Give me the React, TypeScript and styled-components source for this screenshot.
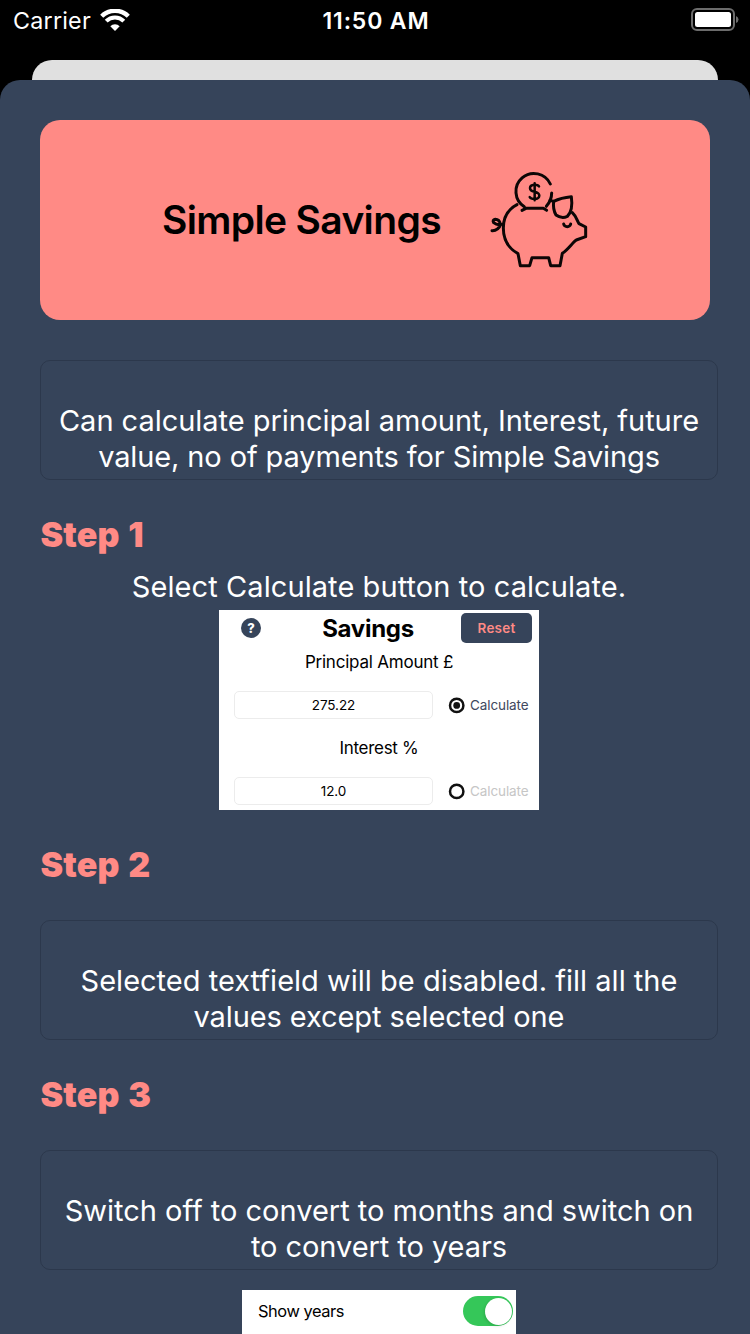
import React from "react";
import styled, { createGlobalStyle } from "styled-components";

const navy = "#36445a";
const coral = "#ff8a85";

const GlobalStyle = createGlobalStyle`
  * { box-sizing: border-box; }
  html, body { margin: 0; padding: 0; background: #000; }
  body { font-family: Inter, "Liberation Sans", sans-serif; overflow: hidden; }
`;

const Screen = styled.main`
  width: 750px;
  height: 1334px;
  background: #000;
  overflow: hidden;
  display: flex;
  flex-direction: column;
`;

const StatusBar = styled.header`
  height: 60px;
  padding: 0 11px 20px 13px;
  display: grid;
  grid-template-columns: 1fr auto 1fr;
  align-items: center;
  color: #fff;
`;

const Carrier = styled.div`
  display: flex;
  align-items: center;
  gap: 9px;
`;

const Clock = styled.div`
  padding-top: 2px;
`;

const BatterySlot = styled.div`
  display: flex;
  justify-content: flex-end;
`;

const Text = styled.span<{ $size: number; $weight?: number; $track?: number; $color?: string }>`
  font-size: ${(p) => p.$size}px;
  font-weight: ${(p) => p.$weight ?? 400};
  letter-spacing: ${(p) => p.$track ?? 0}px;
  color: ${(p) => p.$color ?? "inherit"};
  white-space: nowrap;
`;

const BackCard = styled.div`
  height: 20px;
  margin: 0 32px;
  background: #e0e0e0;
  border-radius: 20px 20px 0 0;
`;

const Sheet = styled.section`
  flex: 1;
  min-height: 0;
  overflow: hidden;
  background: ${navy};
  border-radius: 20px 20px 0 0;
  padding: 40px 32px 0 40px;
  display: flex;
  flex-direction: column;
  > * { flex-shrink: 0; }
`;

const Banner = styled.div`
  width: 670px;
  height: 200px;
  margin-bottom: 40px;
  border-radius: 20px;
  background: ${coral};
  color: #000;
  display: flex;
  align-items: center;
  padding-left: 122px;
`;

const BannerTitle = styled.h1`
  margin: 0;
  padding-bottom: 2px;
  width: 318px;
  font-size: 39px;
  font-weight: 600;
  letter-spacing: -0.65px;
  white-space: nowrap;
`;

const Note = styled.div`
  height: 120px;
  border: 1px solid #2c384c;
  border-radius: 10px;
  padding-top: 42px;
  display: flex;
  flex-direction: column;
  align-items: center;
  color: #fff;
  line-height: 36px;
`;

const StepTitle = styled.h2<{ $gap?: number }>`
  margin: 40px 0 ${(p) => p.$gap ?? 40}px;
  height: 30px;
  padding-left: 0.5px;
  line-height: 30px;
  font-size: 34px;
  font-weight: 900;
  letter-spacing: 0.2px;
  word-spacing: 1.6px;
  color: ${coral};
`;

const Caption = styled.div`
  height: 40px;
  line-height: 34px;
  text-align: center;
  color: #fff;
`;

const Preview = styled.div`
  align-self: center;
  width: 320px;
  height: 200px;
  background: #fff;
  color: #000;
`;

const PreviewHeader = styled.div`
  height: 36px;
  padding: 0 7px 0 22px;
  display: grid;
  grid-template-columns: 34px 1fr 71px;
  align-items: center;
  justify-items: center;
`;

const Help = styled.span`
  justify-self: start;
  width: 20px;
  height: 20px;
  border-radius: 50%;
  background: ${navy};
  color: #fff;
  font-size: 13px;
  font-weight: 800;
  line-height: 20px;
  text-align: center;
`;

const Reset = styled.span`
  width: 71px;
  height: 30px;
  border-radius: 5px;
  background: ${navy};
  display: flex;
  align-items: center;
  justify-content: center;
`;

const FieldLabel = styled.div<{ $height: number; $below: number }>`
  height: ${(p) => p.$height}px;
  margin-bottom: ${(p) => p.$below}px;
  display: flex;
  justify-content: center;
  align-items: center;
`;

const FieldRow = styled.div`
  height: 28px;
  padding-left: 15px;
  display: flex;
  align-items: center;
`;

const Field = styled.div`
  width: 199px;
  height: 28px;
  margin-right: 15px;
  border: 1px solid #ececec;
  border-radius: 5px;
  display: flex;
  align-items: center;
  justify-content: center;
`;

const RadioIcon = styled.svg`
  margin-right: 5px;
`;

const Radio = ({ on }: { on: boolean }) => (
  <RadioIcon width="17" height="17" viewBox="0 0 17 17" fill="none">
    <circle cx="8.7" cy="8.4" r="6.7" stroke="#111" strokeWidth="2.5" />
    {on && <circle cx="8.7" cy="8.4" r="3.4" fill="#111" />}
  </RadioIcon>
);

const SwitchRow = styled.div`
  width: 274px;
  height: 60px;
  margin: 20px 0 0 202px;
  padding: 6px 3px 0 16px;
  background: #fff;
  color: #000;
  display: flex;
  align-items: flex-start;
  justify-content: space-between;
  line-height: 30px;
`;

const Toggle = styled.span`
  width: 50px;
  height: 30px;
  padding: 1.5px;
  border-radius: 15px;
  background: #35c759;
  display: flex;
  justify-content: flex-end;
`;

const Knob = styled.span`
  width: 27px;
  height: 27px;
  border-radius: 50%;
  background: #fff;
  box-shadow: -1px 1px 3px rgba(0, 0, 0, 0.14);
`;

const WifiIcon = () => (
  <svg width="30" height="22" viewBox="0 0 30 22" fill="none">
    <path d="M1.7 7.2 A19 19 0 0 1 28.3 7.2" stroke="#fff" strokeWidth="4.4" />
    <path d="M6.2 12.2 A12.4 12.4 0 0 1 23.8 12.2" stroke="#fff" strokeWidth="4" />
    <path d="M15 22 L10.3 17.3 A6.7 6.7 0 0 1 19.7 17.3 Z" fill="#fff" />
  </svg>
);

const BatteryIcon = () => (
  <svg width="48" height="24" viewBox="0 0 48 24" fill="none">
    <rect x="1" y="1" width="42" height="21" rx="5" stroke="#6c6c6c" strokeWidth="2" />
    <rect x="4" y="4" width="36" height="15" rx="2.5" fill="#fff" />
    <path d="M45 8 Q47.5 9 47.5 11.5 Q47.5 14 45 15 Z" fill="#6c6c6c" />
  </svg>
);

const PiggyIcon = () => (
  <svg
    width="120"
    height="120"
    viewBox="0 0 360 360"
    fill="none"
    stroke="#0c0606"
    strokeWidth="9"
    strokeLinejoin="round"
    strokeLinecap="round"
  >
    <path d="M211 72 A54 54 0 1 0 133 140" />
    <path d="M215 99 Q215 121 199 139" />
    <path d="M126 151 L138 145 H190 L200 151" />
    <path d="M177 79 Q174 74 163 74 Q150 75 150 84 Q150 93 163 95 Q178 98 178 107 Q177 117 164 117 Q152 117 149 111 M164 70 V121" strokeWidth="7.5" />
    <path d="M111 134 C82 149 70 173 70 204 C70 240 85 265 114 281 L121 317 H149 L156 293 H206 L212 317 H240 L247 280 C265 268 277 248 289 240 L317 230 V201 L297 191 C291 182 289 169 277 158" />
    <path d="M210 121 L221 124 Q243 113 274 110 Q280 151 262 169 Q245 177 228 165 Q218 147 221 124" />
    <path d="M251 192 Q253 200 262 200 Q270 200 272 192" />
    <path d="M36 212 Q54 213 62 194 Q58 178 46 178 Q36 180 41 188 Q51 197 67 193" />
  </svg>
);

const previewFields = [
  { label: "Principal Amount £", value: "275.22", on: true, height: 31, below: 14, size: 17, track: -0.22 },
  { label: "Interest %", value: "12.0", on: false, height: 58, below: 0, size: 17, track: -0.3 },
];

export default function App() {
  return (
    <Screen>
      <GlobalStyle />
      <StatusBar>
        <Carrier>
          <Text $size={23.3} $track={0.22}>Carrier</Text>
          <WifiIcon />
        </Carrier>
        <Clock>
          <Text $size={23} $weight={600} $track={0.85}>11:50 AM</Text>
        </Clock>
        <BatterySlot>
          <BatteryIcon />
        </BatterySlot>
      </StatusBar>
      <BackCard />
      <Sheet>
        <Banner>
          <BannerTitle>Simple Savings</BannerTitle>
          <PiggyIcon />
        </Banner>
        <Note>
          <Text $size={29} $track={-0.03}>Can calculate principal amount, Interest, future</Text>
          <Text $size={29} $track={-0.12}>value, no of payments for Simple Savings</Text>
        </Note>
        <StepTitle $gap={20}>Step 1</StepTitle>
        <Caption>
          <Text $size={29} $track={0.08}>Select Calculate button to calculate.</Text>
        </Caption>
        <Preview>
          <PreviewHeader>
            <Help>?</Help>
            <Text $size={24} $weight={700} $track={-0.3}>Savings</Text>
            <Reset>
              <Text $size={13.5} $weight={600} $track={0.2} $color={coral}>Reset</Text>
            </Reset>
          </PreviewHeader>
          {previewFields.map((f) => (
            <React.Fragment key={f.label}>
              <FieldLabel $height={f.height} $below={f.below}>
                <Text $size={f.size} $track={f.track}>{f.label}</Text>
              </FieldLabel>
              <FieldRow>
                <Field>
                  <Text $size={13.5} $track={-0.1}>{f.value}</Text>
                </Field>
                <Radio on={f.on} />
                <Text $size={13.5} $track={-0.1} $color={f.on ? "#41485e" : "#c6c6c6"}>Calculate</Text>
              </FieldRow>
            </React.Fragment>
          ))}
        </Preview>
        <StepTitle>Step 2</StepTitle>
        <Note>
          <Text $size={29} $track={0.01}>Selected textfield will be disabled. fill all the</Text>
          <Text $size={29} $track={-0.1}>values except selected one</Text>
        </Note>
        <StepTitle>Step 3</StepTitle>
        <Note>
          <Text $size={29} $track={-0.01}>Switch off to convert to months and switch on</Text>
          <Text $size={29} $track={-0.06}>to convert to years</Text>
        </Note>
        <SwitchRow>
          <Text $size={16.4} $track={-0.45}>Show years</Text>
          <Toggle>
            <Knob />
          </Toggle>
        </SwitchRow>
      </Sheet>
    </Screen>
  );
}
